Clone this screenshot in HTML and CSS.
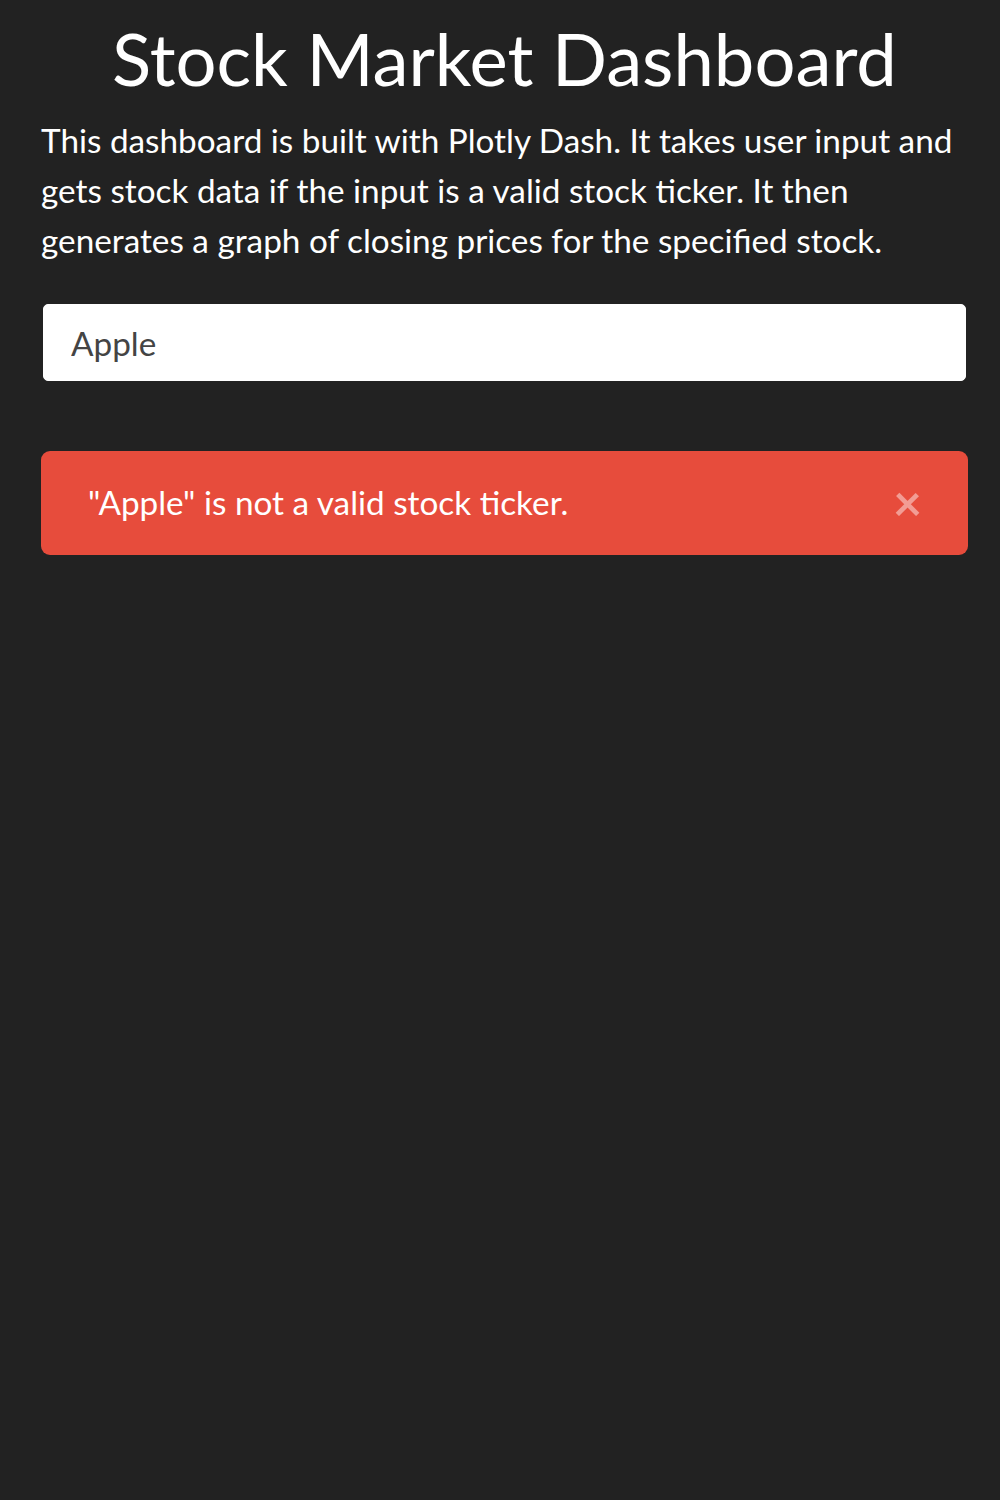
FILE: index.html
```html
<!DOCTYPE html>
<html lang="en">
<head>
<meta charset="utf-8">
<title>Stock Market Dashboard</title>
<link rel="stylesheet" href="styles.css">
</head>
<body>
<div class="container">
  <h1 class="title">Stock Market Dashboard</h1>
  <p class="intro">This dashboard is built with Plotly Dash. It takes user input and gets stock data if the input is a valid stock ticker. It then generates a graph of closing prices for the specified stock.</p>
  <div class="input-wrap">
    <input class="ticker-input" type="text" value="Apple">
  </div>
  <div class="alert">
    <span class="alert-text">"Apple" is not a valid stock ticker.</span>
    <span class="alert-close">&#215;</span>
  </div>
</div>
</body>
</html>
```
FILE: styles.css
```css
html, body {
  margin: 0;
  padding: 0;
  background: #222222;
}
body {
  font-family: Lato, "Noto Sans", sans-serif;
  color: #ffffff;
  min-height: 1500px;
}
.container {
  padding: 0 32px 0 41px;
}
.title {
  margin: 0;
  padding-top: 18px;
  font-size: 72.4px;
  font-weight: 400;
  line-height: 80px;
  text-align: center;
}
.intro {
  margin: 17px 0 0 0;
  font-size: 33.3px;
  line-height: 50px;
}
.input-wrap {
  margin-top: 39px;
  padding: 0 2px 0 2px;
}
.ticker-input {
  display: block;
  box-sizing: border-box;
  width: 100%;
  height: 77px;
  margin: 0;
  padding: 0 27px;
  border: 1px solid #ffffff;
  border-radius: 5px;
  background: #ffffff;
  color: #444444;
  font-family: Lato, "Noto Sans", sans-serif;
  font-size: 33.3px;
  outline: none;
}
.alert {
  margin-top: 70px;
  height: 104px;
  box-sizing: border-box;
  padding: 0 46px 2px 47px;
  display: flex;
  align-items: center;
  justify-content: space-between;
  background: #E74C3C;
  border-radius: 9px;
  font-size: 33.3px;
}
.alert-text {
  line-height: 50px;
}
.alert-close {
  color: rgba(255, 255, 255, 0.45);
  font-size: 50px;
  font-weight: 700;
  line-height: 1;
}
```
